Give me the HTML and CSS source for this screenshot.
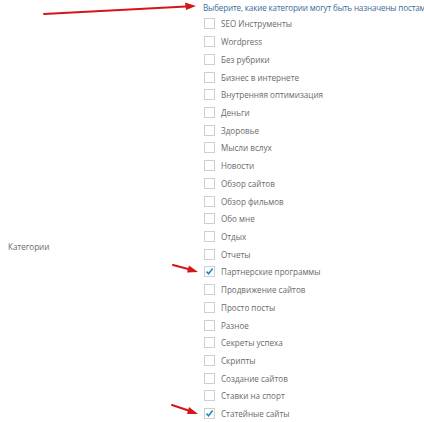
FILE: index.html
```html
<!DOCTYPE html>
<html lang="en">
<head>
    <meta charset="UTF-8">
    <title>Категории</title>
    <link rel="stylesheet" href="styles.css">
</head>
<body>
    <div class="row">
        <div class="label">Категории</div>
        <div class="field">
            <p class="hint">Выберите, какие категории могут быть назначены постам</p>
            <ul class="cats">
                <li><span class="box"></span>SEO Инструменты</li>
                <li><span class="box"></span>Wordpress</li>
                <li><span class="box"></span>Без рубрики</li>
                <li><span class="box"></span>Бизнес в интернете</li>
                <li><span class="box"></span>Внутренняя оптимизация</li>
                <li><span class="box"></span>Деньги</li>
                <li><span class="box"></span>Здоровье</li>
                <li><span class="box"></span>Мысли вслух</li>
                <li><span class="box"></span>Новости</li>
                <li><span class="box"></span>Обзор сайтов</li>
                <li><span class="box"></span>Обзор фильмов</li>
                <li><span class="box"></span>Обо мне</li>
                <li><span class="box"></span>Отдых</li>
                <li><span class="box"></span>Отчеты</li>
                <li><span class="box"><svg width="9" height="9" viewBox="0 0 9 9"><path d="M1.5 4.6 L3.6 6.8 L7.6 1.6" fill="none" stroke="#1e8cbe" stroke-width="1.6"/></svg></span>Партнерские программы</li>
                <li><span class="box"></span>Продвижение сайтов</li>
                <li><span class="box"></span>Просто посты</li>
                <li><span class="box"></span>Разное</li>
                <li><span class="box"></span>Секреты успеха</li>
                <li><span class="box"></span>Скрипты</li>
                <li><span class="box"></span>Создание сайтов</li>
                <li><span class="box"></span>Ставки на спорт</li>
                <li><span class="box"><svg width="9" height="9" viewBox="0 0 9 9"><path d="M1.5 4.6 L3.6 6.8 L7.6 1.6" fill="none" stroke="#1e8cbe" stroke-width="1.6"/></svg></span>Статейные сайты</li>
            </ul>
        </div>
    </div>

    <svg class="arrows" width="424" height="422" viewBox="0 0 424 422">
        <g stroke="#d4161b" stroke-width="2" stroke-linecap="round" fill="#d4161b">
            <line x1="44" y1="14" x2="186" y2="6.5"/>
            <polygon points="196,6 185,2.5 186,10" stroke="none"/>
            <line x1="173" y1="265" x2="190" y2="269.5"/>
            <polygon points="198,272 189,265.5 187,272.5" stroke="none"/>
            <line x1="172" y1="405" x2="190" y2="411"/>
            <polygon points="198,414 189,407 187,414" stroke="none"/>
        </g>
    </svg>
</body>
</html>
```

FILE: styles.css
```css
body {
    margin: 0;
    background: #fff;
    font-family: "Open Sans", Arial, sans-serif;
    font-size: 8.1px;
    color: #555;
}
.row {
    display: flex;
    align-items: flex-start;
}
.label {
    flex-shrink: 0;
    width: 203px;
    padding: 241px 0 0 8px;
    box-sizing: border-box;
    color: #6a6a6a;
}
.field {
    flex-shrink: 0;
}
.hint {
    margin: 0;
    height: 15px;
    line-height: 15px;
    color: #3d6a9a;
    white-space: nowrap;
    letter-spacing: -0.16px;
}
.cats {
    list-style: none;
    margin: 0;
    padding: 0;
}
.cats li {
    display: flex;
    align-items: center;
    height: 17.73px;
    color: #6a6a6a;
    white-space: nowrap;
}
.box {
    width: 9px;
    height: 9px;
    border: 1px solid #cfcfcf;
    background: #fff;
    margin: 0 6px 0 1px;
    display: inline-flex;
    align-items: center;
    justify-content: center;
}
.arrows {
    position: absolute;
    left: 0;
    top: 0;
    pointer-events: none;
}
```
